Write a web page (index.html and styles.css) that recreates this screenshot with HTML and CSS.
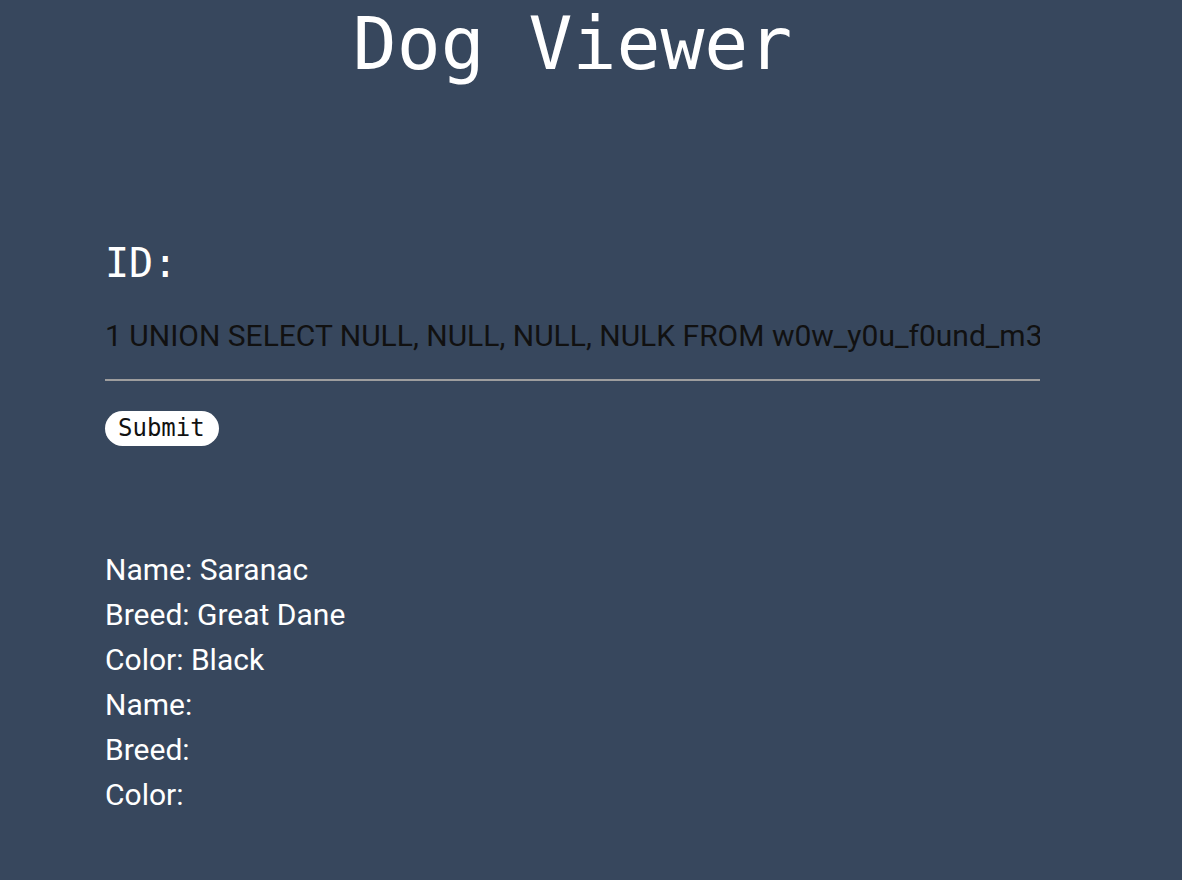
FILE: index.html
```html
<!DOCTYPE html>
<html>
<head>
<meta charset="utf-8">
<title>Dog Viewer</title>
<link rel="stylesheet" href="styles.css">
</head>
<body>
<div class="page">
  <h1 class="title">Dog Viewer</h1>
  <form class="form">
    <label class="label" for="id">ID:</label>
    <input class="field" id="id" type="text" value="1 UNION SELECT NULL, NULL, NULL, NULK FROM w0w_y0u_f0und_m3">
    <button class="submit" type="button">Submit</button>
  </form>
  <div class="results">
    <div class="row">Name: Saranac</div>
    <div class="row">Breed: Great Dane</div>
    <div class="row">Color: Black</div>
    <div class="row">Name: </div>
    <div class="row">Breed: </div>
    <div class="row">Color: </div>
  </div>
</div>
</body>
</html>
```
FILE: styles.css
```css
html, body {
  margin: 0;
  padding: 0;
  background: #37475d;
  height: 100%;
}
.page {
  padding: 0 142px 0 105px;
  color: #ffffff;
}
.title {
  margin: 0;
  font-family: "DejaVu Sans Mono", monospace;
  font-weight: normal;
  font-size: 73px;
  line-height: 88px;
  text-align: center;
}
.form {
  display: flex;
  flex-direction: column;
  align-items: flex-start;
  margin-top: 151px;
}
.label {
  font-family: "DejaVu Sans Mono", monospace;
  font-size: 40px;
  line-height: 48px;
}
.field {
  margin-top: 29px;
  width: 935px;
  box-sizing: border-box;
  border: none;
  border-bottom: 2px solid #9e9e9e;
  background: transparent;
  padding: 0 0 23px 0;
  font-family: Roboto, "Liberation Sans", sans-serif;
  font-size: 30px;
  line-height: 40px;
  color: #111111;
  outline: none;
}
.submit {
  margin-top: 30px;
  height: 35px;
  padding: 0 14px 0 13px;
  border: none;
  border-radius: 18px;
  background: #ffffff;
  color: #111111;
  font-family: "DejaVu Sans Mono", monospace;
  font-size: 24px;
  line-height: 35px;
}
.results {
  margin-top: 101px;
  font-family: Roboto, "Liberation Sans", sans-serif;
  font-size: 30px;
  line-height: 45px;
}
.row {
  white-space: pre;
}
```
